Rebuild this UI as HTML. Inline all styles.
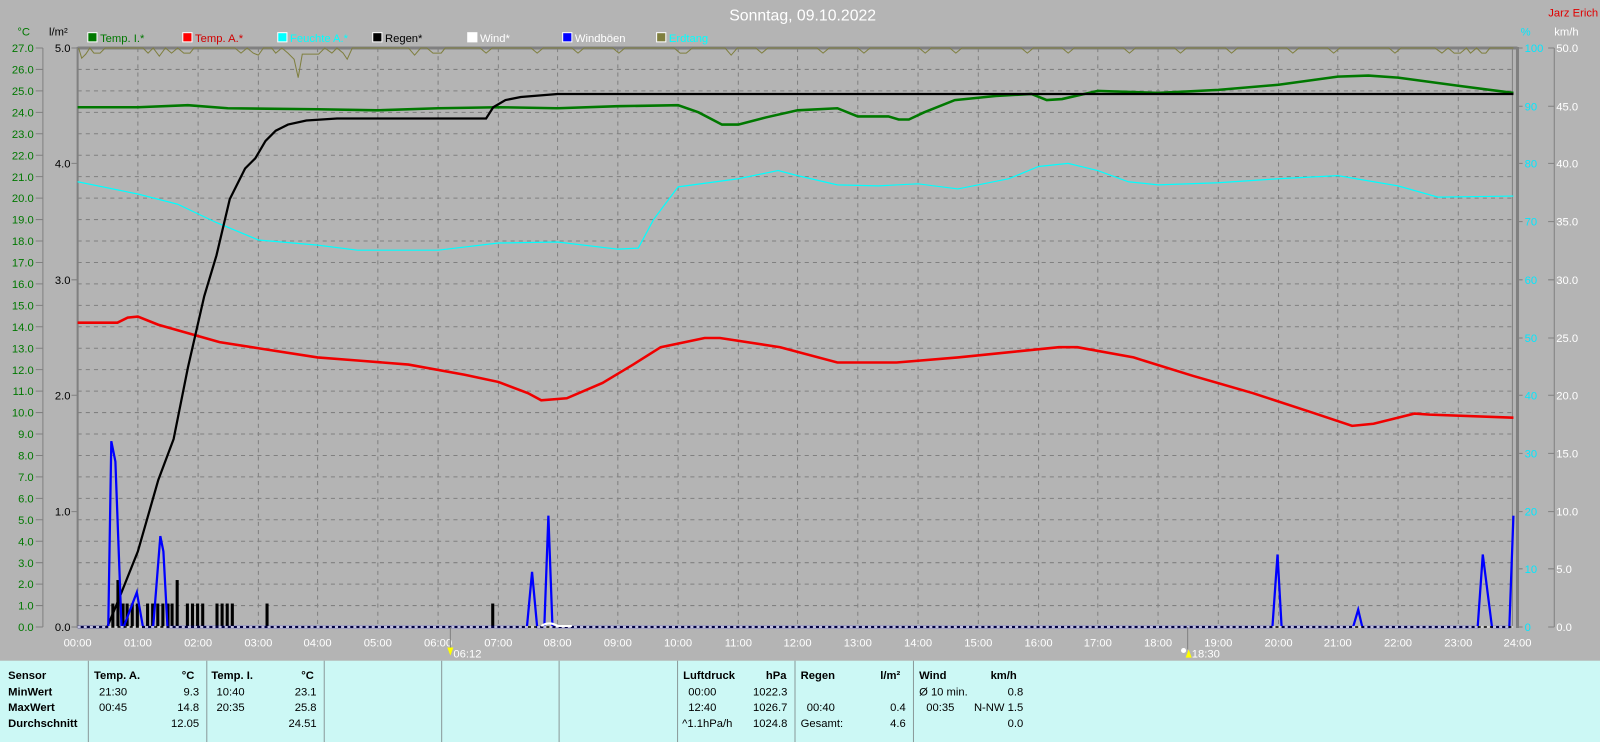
<!DOCTYPE html>
<html><head><meta charset="utf-8"><style>
html,body{margin:0;padding:0;background:#b4b4b4;overflow:hidden;width:1600px;height:734px}
#w{position:absolute;left:0;top:0;width:1567px;height:719px;transform:scale(1.0212);transform-origin:0 0;font-family:"Liberation Sans",sans-serif}
svg text{font-family:"Liberation Sans",sans-serif}
#tb{position:absolute;left:0;top:647px;width:1567px;height:80px;background:#ccf8f5;font-size:11px;color:#000}
.c{position:absolute;top:0;height:80px;border-left:1px solid #8a9a9a}
.t{position:absolute;white-space:nowrap}
.b{font-weight:bold}
</style></head><body><div id="w">
<svg width="1567" height="647" style="position:absolute;left:0;top:0">
<text x="786" y="20" fill="#fff" font-size="15.5" text-anchor="middle">Sonntag, 09.10.2022</text>
<text x="1565" y="16" fill="#e00000" font-size="11" text-anchor="end">Jarz Erich</text>
<g font-size="11">
<text x="17" y="35" fill="#007800">°C</text>
<text x="48" y="35" fill="#000">l/m²</text>
<text x="1489" y="35" fill="#00e8ff">%</text>
<text x="1522" y="35" fill="#fff">km/h</text>
<rect x="86" y="32" width="9" height="9" fill="#007800" stroke="#fff"/><text x="98" y="41" fill="#007800">Temp. I.*</text>
<rect x="179" y="32" width="9" height="9" fill="#f00" stroke="#fff"/><text x="191" y="41" fill="#d00000">Temp. A.*</text>
<rect x="272" y="32" width="9" height="9" fill="#0ff" stroke="#fff"/><text x="284" y="41" fill="#0ff">Feuchte A.*</text>
<rect x="365" y="32" width="9" height="9" fill="#000" stroke="#fff"/><text x="377" y="41" fill="#000">Regen*</text>
<rect x="458" y="32" width="9" height="9" fill="#fff" stroke="#fff"/><text x="470" y="41" fill="#fff">Wind*</text>
<rect x="551" y="32" width="9" height="9" fill="#00f" stroke="#fff"/><text x="563" y="41" fill="#fff">Windböen</text>
<rect x="643" y="32" width="9" height="9" fill="#7f7f3f" stroke="#fff"/><text x="655" y="41" fill="#0ff">Erdtang</text>
</g>
<!-- grid -->
<g stroke="#808080" stroke-dasharray="4,4" stroke-width="1">
<path d="M76 68H1482M76 89H1482M76 110H1482M76 131H1482M76 152H1482M76 173H1482M76 194H1482M76 215H1482M76 236H1482M76 257H1482M76 278H1482M76 299H1482M76 320H1482M76 341H1482M76 362H1482M76 383H1482M76 404H1482M76 425H1482M76 446H1482M76 467H1482M76 488H1482M76 509H1482M76 530H1482M76 551H1482M76 572H1482M76 593H1482"/>
<path d="M135 47V614M194 47V614M253 47V614M311 47V614M370 47V614M429 47V614M488 47V614M546 47V614M605 47V614M664 47V614M723 47V614M781 47V614M840 47V614M899 47V614M958 47V614M1017 47V614M1075 47V614M1134 47V614M1193 47V614M1252 47V614M1310 47V614M1369 47V614M1428 47V614"/>
</g>
<!-- frame -->
<path d="M76 47H1486" stroke="#808080" stroke-width="3"/>
<path d="M76 46V615" stroke="#808080" stroke-width="2"/>
<path d="M1481 47V615" stroke="#808080" stroke-width="1"/>
<path d="M1486 46V615" stroke="#808080" stroke-width="3"/>
<!-- left axes -->
<path d="M42 47V614" stroke="#808080"/>
<g stroke="#808080"><path d="M35 47H42M35 68H42M35 89H42M35 110H42M35 131H42M35 152H42M35 173H42M35 194H42M35 215H42M35 236H42M35 257H42M35 278H42M35 299H42M35 320H42M35 341H42M35 362H42M35 383H42M35 404H42M35 425H42M35 446H42M35 467H42M35 488H42M35 509H42M35 530H42M35 551H42M35 572H42M35 593H42M35 614H42"/><path d="M70 47H76M70 160H76M70 274H76M70 387H76M70 501H76M70 614H76"/></g>
<g font-size="11" fill="#007800" text-anchor="end">
<text x="33" y="51">27.0</text><text x="33" y="72">26.0</text><text x="33" y="93">25.0</text><text x="33" y="114">24.0</text><text x="33" y="135">23.0</text><text x="33" y="156">22.0</text><text x="33" y="177">21.0</text><text x="33" y="198">20.0</text><text x="33" y="219">19.0</text><text x="33" y="240">18.0</text><text x="33" y="261">17.0</text><text x="33" y="282">16.0</text><text x="33" y="303">15.0</text><text x="33" y="324">14.0</text><text x="33" y="345">13.0</text><text x="33" y="366">12.0</text><text x="33" y="387">11.0</text><text x="33" y="408">10.0</text><text x="33" y="429">9.0</text><text x="33" y="450">8.0</text><text x="33" y="471">7.0</text><text x="33" y="492">6.0</text><text x="33" y="513">5.0</text><text x="33" y="534">4.0</text><text x="33" y="555">3.0</text><text x="33" y="576">2.0</text><text x="33" y="597">1.0</text><text x="33" y="618">0.0</text>
</g>
<g font-size="11" fill="#000" text-anchor="end">
<text x="69" y="51">5.0</text><text x="69" y="164">4.0</text><text x="69" y="278">3.0</text><text x="69" y="391">2.0</text><text x="69" y="505">1.0</text><text x="69" y="618">0.0</text>
</g>
<!-- right axes -->
<path d="M1522 47V614" stroke="#808080"/>
<g stroke="#808080"><path d="M1516 47H1522M1516 104H1522M1516 160H1522M1516 217H1522M1516 274H1522M1516 331H1522M1516 387H1522M1516 444H1522M1516 501H1522M1516 557H1522M1516 614H1522M1486 47H1491M1486 104H1491M1486 160H1491M1486 217H1491M1486 274H1491M1486 331H1491M1486 387H1491M1486 444H1491M1486 501H1491M1486 557H1491M1486 614H1491"/></g>
<g font-size="11" fill="#00e8ff">
<text x="1493" y="51">100</text><text x="1493" y="108">90</text><text x="1493" y="164">80</text><text x="1493" y="221">70</text><text x="1493" y="278">60</text><text x="1493" y="335">50</text><text x="1493" y="391">40</text><text x="1493" y="448">30</text><text x="1493" y="505">20</text><text x="1493" y="561">10</text><text x="1493" y="618">0</text>
</g>
<g font-size="11" fill="#fff">
<text x="1524" y="51">50.0</text><text x="1524" y="108">45.0</text><text x="1524" y="164">40.0</text><text x="1524" y="221">35.0</text><text x="1524" y="278">30.0</text><text x="1524" y="335">25.0</text><text x="1524" y="391">20.0</text><text x="1524" y="448">15.0</text><text x="1524" y="505">10.0</text><text x="1524" y="561">5.0</text><text x="1524" y="618">0.0</text>
</g>
<!-- olive -->
<polyline fill="none" stroke="#7f7f3f" stroke-width="1" points="77,47 80,57 84,53 88,47 92,52 98,52 103,47 140,47 145,52 150,47 156,55 162,47 168,52 174,47 180,52 186,52 190,47 230,47 236,52 242,47 248,52 253,54 258,47 266,47 270,52 276,47 282,52 288,58 292,76 296,53 312,53 318,47 325,52 330,47 336,52 340,58 345,47 400,47 406,54 412,47 418,47 424,52 432,52 436,47 470,47 476,52 482,47 520,47 526,52 532,47 560,47 566,52 572,47 600,47 606,52 612,47 660,47 666,52 672,52 678,47 710,47 716,54 722,47 740,47 746,52 752,47 800,47 806,52 812,47 840,47 846,52 852,47 900,47 906,52 912,47 930,47 936,52 942,47 1000,47 1006,52 1012,47 1040,47 1046,52 1052,47 1100,47 1106,52 1112,47 1150,47 1156,52 1162,47 1200,47 1206,52 1212,47 1260,47 1266,52 1272,47 1300,47 1306,52 1312,47 1360,47 1366,52 1372,47 1405,47 1412,52 1418,47 1424,52 1430,52 1436,47 1440,52 1446,47 1451,52 1455,52 1459,47 1482,47"/>
<!-- cyan humidity -->
<polyline fill="none" stroke="#00ffff" stroke-width="1.2" points="76,178 135,190 174,200 212,218 253,235 311,240 350,245 429,245 488,238 546,237 605,244 625,243 640,215 664,183 723,175 762,167 781,172 820,181 860,182 899,180 938,185 988,175 1017,163 1046,160 1075,167 1105,178 1134,181 1193,179 1252,175 1310,172 1369,182 1408,193 1482,192"/>
<!-- red -->
<polyline fill="none" stroke="#f00000" stroke-width="2.5" points="76,316 115,316 125,311 135,310 155,318 215,335 253,341 311,350 350,353 400,357 455,367 488,374 517,385 530,392 555,390 590,375 620,357 647,340 690,331 705,331 764,340 820,355 878,355 938,350 997,344 1037,340 1055,340 1110,350 1168,368 1227,385 1285,404 1324,417 1345,415 1385,405 1400,406 1482,409"/>
<!-- green -->
<polyline fill="none" stroke="#007800" stroke-width="2.5" points="76,105 135,105 184,103 223,106 311,107 370,108 429,106 488,105 546,106 605,104 664,103 684,110 707,122 723,122 750,115 781,108 820,106 840,114 870,114 880,117 890,117 905,110 935,98 975,94 1010,92 1025,98 1040,97 1075,89 1134,91 1193,88 1252,83 1310,75 1340,74 1369,76 1428,84 1482,91"/>
<!-- black cumulative rain -->
<polyline fill="none" stroke="#000" stroke-width="2.2" points="76,614 105,614 115,590 135,540 155,470 170,430 184,360 200,290 212,250 225,195 240,165 250,155 260,138 270,128 282,122 300,118 330,116 476,116 483,105 495,98 510,95 546,92 1482,92"/>
<!-- bars -->
<g fill="#000">
<rect x="109" y="591" width="3" height="23"/><rect x="114" y="568" width="3" height="46"/><rect x="119" y="591" width="3" height="23"/><rect x="123" y="591" width="3" height="23"/><rect x="128" y="591" width="3" height="23"/><rect x="133" y="591" width="3" height="23"/><rect x="143" y="591" width="3" height="23"/><rect x="148" y="591" width="3" height="23"/><rect x="153" y="591" width="3" height="23"/><rect x="158" y="591" width="3" height="23"/><rect x="163" y="591" width="3" height="23"/><rect x="167" y="591" width="3" height="23"/><rect x="172" y="568" width="3" height="46"/><rect x="182" y="591" width="3" height="23"/><rect x="187" y="591" width="3" height="23"/><rect x="192" y="591" width="3" height="23"/><rect x="197" y="591" width="3" height="23"/><rect x="211" y="591" width="3" height="23"/><rect x="216" y="591" width="3" height="23"/><rect x="221" y="591" width="3" height="23"/><rect x="226" y="591" width="3" height="23"/><rect x="260" y="591" width="3" height="23"/><rect x="481" y="591" width="3" height="23"/>
</g>
<!-- blue gusts -->
<polyline fill="none" stroke="#0000ff" stroke-width="2.2" points="76,614 106,614 109,432 113,452 119,614 121,614 134,580 140,614 150,614 157,525 160,540 164,614 516,614 521,560 526,614 533,614 537,505 541,614 1246,614 1251,543 1255,614 1325,614 1330,597 1334,614 1447,614 1452,543 1461,614 1478,614 1482,505"/>
<!-- baseline -->
<path d="M76 614H1482" stroke="#000" stroke-width="1.5"/>
<path d="M76 614H1482" stroke="#fff" stroke-width="1.5" stroke-dasharray="3,3"/>
<path d="M530 613 Q538 608 546 613 L560 613" stroke="#fff" stroke-width="2" fill="none"/>
<!-- time labels -->
<g font-size="11" fill="#fff" text-anchor="middle">
<text x="76" y="633">00:00</text><text x="135" y="633">01:00</text><text x="194" y="633">02:00</text><text x="253" y="633">03:00</text><text x="311" y="633">04:00</text><text x="370" y="633">05:00</text><text x="429" y="633">06:00</text><text x="488" y="633">07:00</text><text x="546" y="633">08:00</text><text x="605" y="633">09:00</text><text x="664" y="633">10:00</text><text x="723" y="633">11:00</text><text x="781" y="633">12:00</text><text x="840" y="633">13:00</text><text x="899" y="633">14:00</text><text x="958" y="633">15:00</text><text x="1017" y="633">16:00</text><text x="1075" y="633">17:00</text><text x="1134" y="633">18:00</text><text x="1193" y="633">19:00</text><text x="1252" y="633">20:00</text><text x="1310" y="633">21:00</text><text x="1369" y="633">22:00</text><text x="1428" y="633">23:00</text><text x="1486" y="633">24:00</text>
</g>
<path d="M441 614V636M1163 614V636" stroke="#808080"/>
<path d="M438 634 L444 634 L441 642 Z" fill="#ff0"/>
<circle cx="1159" cy="637" r="2.5" fill="#fff"/><path d="M1161 644 L1164 636 L1167 644 Z" fill="#ff0"/>
<g font-size="11" fill="#fff"><text x="444" y="644">06:12</text><text x="1167" y="644">18:30</text></g>
</svg>
<div id="tb">
<div class="c" style="left:86px"></div><div class="c" style="left:202px"></div><div class="c" style="left:317px"></div><div class="c" style="left:432px"></div><div class="c" style="left:547px"></div><div class="c" style="left:663px"></div><div class="c" style="left:778px"></div><div class="c" style="left:894px"></div>
<div class="t b" style="left:8px;top:9px">Sensor</div><div class="t b" style="left:8px;top:25px">MinWert</div><div class="t b" style="left:8px;top:40px">MaxWert</div><div class="t b" style="left:8px;top:56px">Durchschnitt</div>
<div class="t b" style="left:92px;top:9px">Temp. A.</div><div class="t b" style="left:178px;top:9px">°C</div>
<div class="t" style="left:97px;top:25px">21:30</div><div class="t" style="right:1372px;top:25px">9.3</div>
<div class="t" style="left:97px;top:40px">00:45</div><div class="t" style="right:1372px;top:40px">14.8</div>
<div class="t" style="right:1372px;top:56px">12.05</div>
<div class="t b" style="left:207px;top:9px">Temp. I.</div><div class="t b" style="left:295px;top:9px">°C</div>
<div class="t" style="left:212px;top:25px">10:40</div><div class="t" style="right:1257px;top:25px">23.1</div>
<div class="t" style="left:212px;top:40px">20:35</div><div class="t" style="right:1257px;top:40px">25.8</div>
<div class="t" style="right:1257px;top:56px">24.51</div>
<div class="t b" style="left:669px;top:9px">Luftdruck</div><div class="t b" style="left:750px;top:9px">hPa</div>
<div class="t" style="left:674px;top:25px">00:00</div><div class="t" style="right:796px;top:25px">1022.3</div>
<div class="t" style="left:674px;top:40px">12:40</div><div class="t" style="right:796px;top:40px">1026.7</div>
<div class="t" style="left:668px;top:56px">^1.1hPa/h</div><div class="t" style="right:796px;top:56px">1024.8</div>
<div class="t b" style="left:784px;top:9px">Regen</div><div class="t b" style="left:862px;top:9px">l/m²</div>
<div class="t" style="left:790px;top:40px">00:40</div><div class="t" style="right:680px;top:40px">0.4</div>
<div class="t" style="left:784px;top:56px">Gesamt:</div><div class="t" style="right:680px;top:56px">4.6</div>
<div class="t b" style="left:900px;top:9px">Wind</div><div class="t b" style="left:970px;top:9px">km/h</div>
<div class="t" style="left:900px;top:25px">Ø 10 min.</div><div class="t" style="right:565px;top:25px">0.8</div>
<div class="t" style="left:907px;top:40px">00:35</div><div class="t" style="right:565px;top:40px">N-NW 1.5</div>
<div class="t" style="right:565px;top:56px">0.0</div>
</div>
</div></body></html>
